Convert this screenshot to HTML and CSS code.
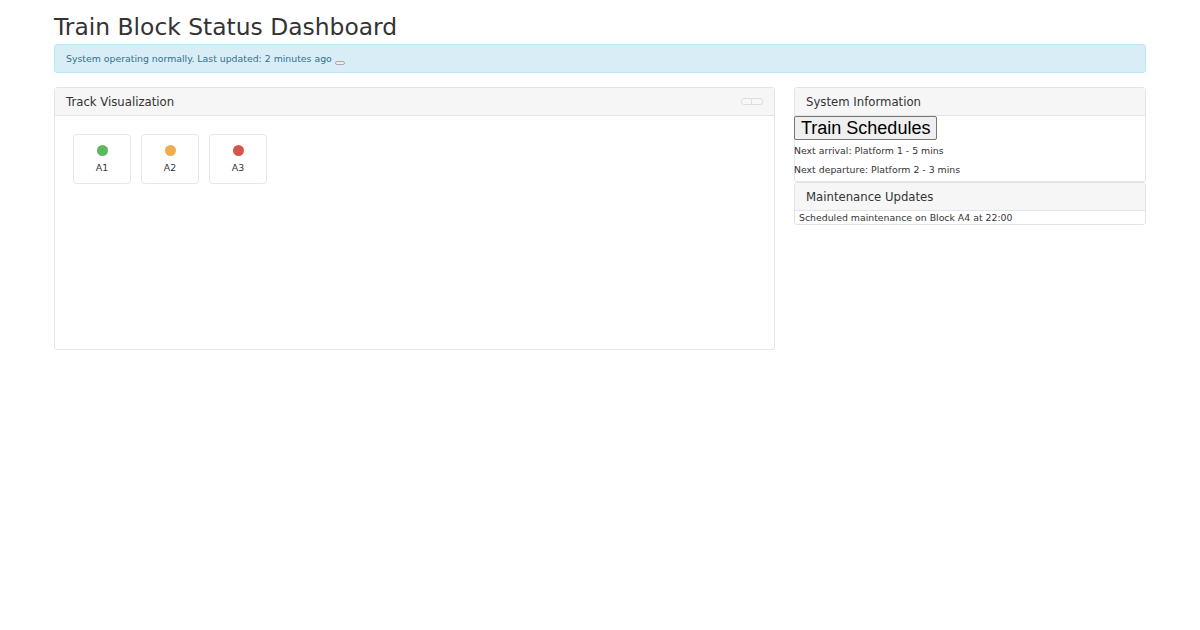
FILE: index.html
```html
<!DOCTYPE html>
<html>
<head>
<meta charset="utf-8">
<link rel="stylesheet" href="styles.css">
</head>
<body>
<div class="container">
  <h1 class="title">Train Block Status Dashboard</h1>
  <div class="alert">System operating normally. Last updated: 2 minutes ago<button class="mini-btn"></button></div>
  <div class="row">
    <div class="panel track">
      <div class="panel-heading heading-flex">
        <span>Track Visualization</span>
        <span class="btn-group"><button class="gbtn"></button><button class="gbtn"></button></span>
      </div>
      <div class="panel-body blocks">
        <div class="block"><span class="dot green"></span><span class="lbl">A1</span></div>
        <div class="block"><span class="dot orange"></span><span class="lbl">A2</span></div>
        <div class="block"><span class="dot red"></span><span class="lbl">A3</span></div>
      </div>
    </div>
    <div class="side">
      <div class="panel info">
        <div class="panel-heading">System Information</div>
        <div class="info-body">
          <button class="sched-btn">Train Schedules</button>
          <p class="line first">Next arrival: Platform 1 - 5 mins</p>
          <p class="line">Next departure: Platform 2 - 3 mins</p>
        </div>
      </div>
      <div class="panel maint">
        <div class="panel-heading">Maintenance Updates</div>
        <div class="maint-body">Scheduled maintenance on Block A4 at 22:00</div>
      </div>
    </div>
  </div>
</div>
</body>
</html>
```
FILE: styles.css
```css
html, body { margin: 0; padding: 0; background: #fff; }
body { font-family: "DejaVu Sans", sans-serif; color: #333; }
.container { width: 1092px; margin: 0 auto; padding-top: 13px; }
.title { font-size: 23.4px; font-weight: normal; margin: 0 0 2px 0; line-height: 29px; color: #333; }
.alert {
  background: #d9edf7; border: 1px solid #bce8f1; color: #31708f;
  border-radius: 3px; font-size: 9.36px; height: 27px; line-height: 27px;
  padding: 0 11px; box-sizing: content-box; margin-bottom: 14px;
}
.mini-btn {
  display: inline-block; width: 10px; height: 4px; padding: 0; border: 1px solid #aaa;
  border-radius: 2px; background: #eee; vertical-align: -2px; margin-left: 3px;
}
.row { display: grid; grid-template-columns: 721px 352px; column-gap: 19px; align-items: start; }
.side { display: flex; flex-direction: column; }
.panel { border: 1px solid #e3e4e6; border-radius: 3px; background: #fff; }
.panel-heading {
  background: #f6f6f7; border-bottom: 1px solid #e3e4e6; height: 27px; line-height: 29px;
  padding: 0 11px; font-size: 11.7px; color: #333; box-sizing: content-box;
}
.heading-flex { display: flex; justify-content: space-between; align-items: center; line-height: 27px; }
.heading-flex > span:first-child { position: relative; top: 1px; }
.btn-group { display: flex; margin-right: 0; }
.gbtn { width: 11px; height: 7px; padding: 0; border: 1px solid #ddd; background: #f8f8f8; }
.gbtn:first-child { border-radius: 3px 0 0 3px; }
.gbtn:last-child { border-radius: 0 3px 3px 0; border-left: none; }
.track { height: 263px; box-sizing: border-box; }
.blocks { display: flex; gap: 10px; padding: 18px 18px; }
.block {
  width: 58px; height: 50px; box-sizing: border-box; border: 1px solid #e6e7e9; border-radius: 4px;
  display: flex; flex-direction: column; align-items: center; padding-top: 10px;
}
.dot { width: 11px; height: 11px; border-radius: 50%; display: block; }
.green { background: #5cb85c; }
.orange { background: #f0ad4e; }
.red { background: #d9534f; }
.lbl { font-size: 9.36px; margin-top: 6px; color: #333; }
.info-body { padding: 0 0 2px 0; margin-left: -1px; }
.sched-btn {
  font-family: "Liberation Sans", Arial, sans-serif; font-size: 18px; padding: 0 6px; height: 24px;
  border: 1px solid #767676; border-radius: 2px; background: #efefef; color: #000; display: block;
  margin: 0; line-height: 22px;
}
.line { margin: 0; font-size: 9.36px; line-height: 19px; color: #333; }
.line.first { margin-top: 1px; }
.maint { margin-top: 0; }
.maint-body { font-size: 9.36px; padding: 0 4px; line-height: 13px; }
```
